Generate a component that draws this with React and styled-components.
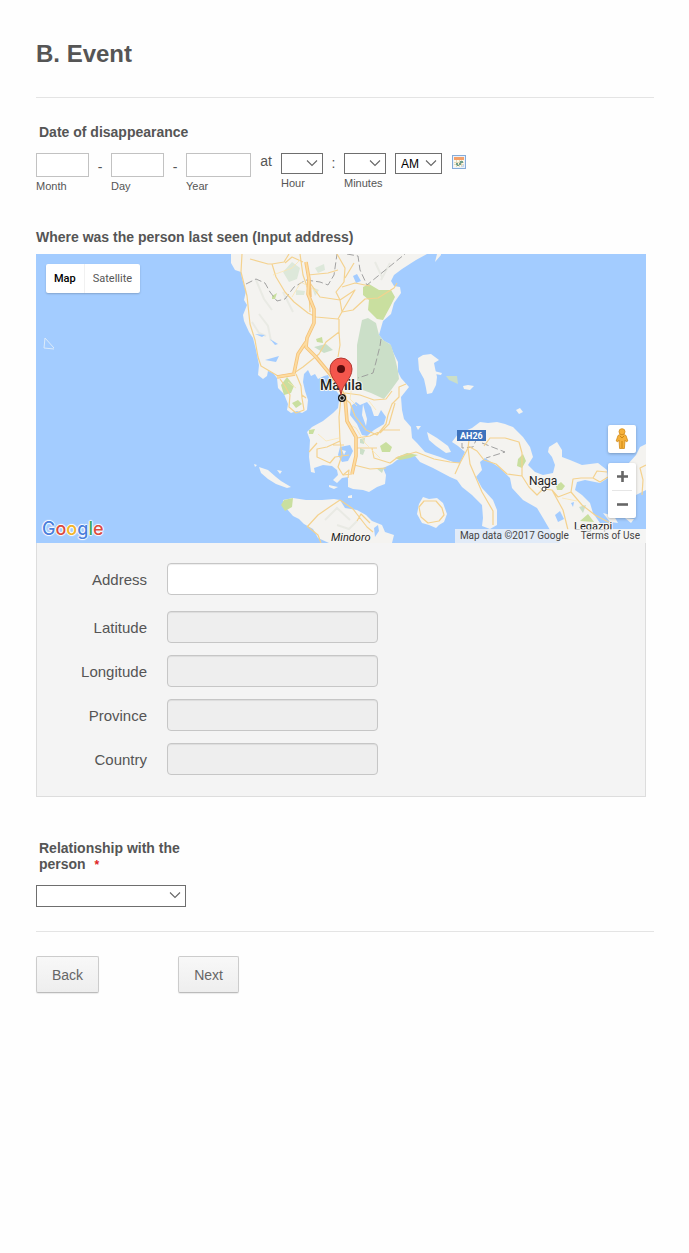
import React from 'react';
import styled, { createGlobalStyle } from 'styled-components';

const GlobalStyle = createGlobalStyle`
  * { box-sizing: border-box; }
  body {
    margin: 0;
    background: #fefefe;
    color: #555;
    font-family: "Liberation Sans", Arial, sans-serif;
    font-size: 14px;
  }
`;

const Form = styled.form`
  display: flex;
  flex-direction: column;
  padding: 40px 35px 24px 36px;
`;

const Title = styled.h2`
  margin: 0;
  font-size: 24px;
  line-height: 28px;
`;

const Divider = styled.hr`
  width: 100%;
  height: 1px;
  margin: ${(p) => p.$before}px 0 ${(p) => p.$after}px;
  border: 0;
  background: #e4e4e4;
`;

const Question = styled.label`
  display: block;
  max-width: ${(p) => (p.$narrow ? '150px' : 'none')};
  padding-left: ${(p) => (p.$indent ? 3 : 0)}px;
  font-size: 14px;
  font-weight: 700;
  line-height: 16px;
`;

const Required = styled.span`
  margin-left: 5px;
  color: #d22;
  font-size: 12px;
`;

const DateRow = styled.div`
  display: flex;
  align-items: flex-start;
  margin: 13px 0 36px;
`;

const Part = styled.div`
  display: flex;
  flex-direction: column;
  gap: 3px;
`;

const PartLabel = styled.label`
  font-size: 11px;
  line-height: 13px;
  color: #555;
`;

const Separator = styled.span`
  width: ${(p) => p.$width}px;
  padding-top: ${(p) => p.$top || 0}px;
  text-align: center;
  line-height: 17px;
`;

const DateInput = styled.input`
  width: ${(p) => p.$width}px;
  height: 24px;
  padding: 2px 4px;
  border: 1px solid #c2c2c2;
  background: #fff;
  font: inherit;
`;

const SelectWrap = styled.div`
  position: relative;
  width: ${(p) => p.$width}px;
  margin-left: ${(p) => p.$before || 0}px;
  height: ${(p) => p.$height || 21}px;

  svg {
    position: absolute;
    top: 6px;
    right: 5px;
    pointer-events: none;
  }
`;

const SelectBox = styled.select`
  appearance: none;
  display: block;
  width: 100%;
  height: 100%;
  padding: 0 5px;
  border: 1px solid #6e6e6e;
  border-radius: 0;
  background: #fff;
  color: #000;
  font-family: inherit;
  font-size: 12px;
`;

const IconButton = styled.button`
  display: flex;
  margin: 2px 0 0 10px;
  padding: 0;
  border: 0;
  background: none;
`;

const Picker = styled.section`
  margin: 9px 8px 43px 0;
`;

const MapView = styled.div`
  position: relative;
  height: 289px;
  overflow: hidden;
  background: #a3ccff;
  font-family: Roboto, sans-serif;
`;

const MapArt = styled.svg`
  display: block;
  width: 100%;
  height: 100%;
`;

const MapTypes = styled.div`
  position: absolute;
  top: 10px;
  left: 10px;
  display: flex;
  border-radius: 2px;
  background: #fff;
  box-shadow: 0 1px 2px rgba(0, 0, 0, 0.2);
`;

const MapType = styled.button`
  height: 29px;
  padding: 0 8px;
  border: 0;
  border-left: ${(p) => (p.$active ? '0' : '1px solid #f1f1f1')};
  background: none;
  color: ${(p) => (p.$active ? '#000' : '#565656')};
  font-family: inherit;
  font-size: 11px;
  font-weight: ${(p) => (p.$active ? 500 : 400)};
`;

const MapTools = styled.div`
  position: absolute;
  right: 10px;
  bottom: 25px;
  display: flex;
  flex-direction: column;
  gap: 10px;
`;

const ToolCard = styled.div`
  display: flex;
  flex-direction: column;
  align-items: center;
  width: 28px;
  border-radius: 2px;
  background: #fff;
  box-shadow: 0 1px 3px rgba(0, 0, 0, 0.25);
`;

const ToolButton = styled.button`
  display: flex;
  align-items: center;
  justify-content: center;
  width: 28px;
  height: ${(p) => p.$height}px;
  padding: 0;
  border: 0;
  background: none;
`;

const ToolRule = styled.span`
  width: 20px;
  height: 1px;
  background: #e6e6e6;
`;

const Attribution = styled.div`
  position: absolute;
  right: 0;
  bottom: 0;
  display: flex;
  gap: 12px;
  padding: 0 6px 0 5px;
  background: rgba(245, 245, 245, 0.75);
  color: #444;
  font-size: 10px;
  line-height: 14px;

  a {
    color: inherit;
    text-decoration: none;
  }
`;

const Details = styled.div`
  display: flex;
  flex-direction: column;
  gap: 12px;
  padding: 20px 20px 21px 0;
  border: 1px solid #ddd;
  border-top: 0;
  background: #f4f4f4;
`;

const DetailRow = styled.div`
  display: grid;
  grid-template-columns: 110px 211px;
  gap: 20px;
  align-items: center;
  padding-bottom: ${(p) => (p.$first ? 4 : 0)}px;

  label {
    padding-top: 2px;
    text-align: right;
    font-size: 15px;
    line-height: 18px;
  }
`;

const DetailInput = styled.input`
  width: 100%;
  height: 32px;
  padding: 4px 8px;
  border: 1px solid #c6c6c6;
  border-radius: 4px;
  background: ${(p) => (p.readOnly ? '#eee' : '#fff')};
  box-shadow: inset 0 1px 1px rgba(0, 0, 0, 0.075);
  font: inherit;
`;

const Answer = styled.div`
  margin-top: 12px;
`;

const Actions = styled.div`
  display: flex;
  gap: 79px;
`;

const Button = styled.button`
  height: 37px;
  padding: 0 15px;
  border: 1px solid #ccc;
  border-bottom-color: #bbb;
  border-radius: 2px;
  background: linear-gradient(#f8f8f8, #eee);
  box-shadow: 0 1px 1px rgba(0, 0, 0, 0.08);
  color: #666;
  font-family: inherit;
  font-size: 14px;
`;

const Logo = styled.div`
  position: absolute;
  left: 6px;
  bottom: 1px;
  font-family: Inter, sans-serif;
  font-size: 18px;
  line-height: 26px;
  font-weight: 500;
  text-shadow: 1px 0 1px #fff, -1px 0 1px #fff, 0 1px 1px #fff, 0 -1px 1px #fff;
`;

const Tint = styled.span`
  color: ${(p) => p.$color};
`;

const logoColors = ['#4a7fdc', '#dc4a40', '#f2b52a', '#4a7fdc', '#3da757', '#dc4a40'];

const details = ['Address', 'Latitude', 'Longitude', 'Province', 'Country'];

function Select({ id, label, value = '', width, height, before }) {
  return (
    <SelectWrap $width={width} $height={height} $before={before}>
      <SelectBox id={id} aria-label={label} defaultValue={value}>
        <option value={value}>{value}</option>
      </SelectBox>
      <svg width="12" height="9" viewBox="0 0 12 9" aria-hidden="true">
        <path d="M1 1.5 6 6.5 11 1.5" fill="none" stroke="#666" strokeWidth="1.1" />
      </svg>
    </SelectWrap>
  );
}

function CalendarIcon() {
  return (
    <svg width="14" height="14" viewBox="0 0 14 14" aria-hidden="true">
      <rect x="0.5" y="0.5" width="13" height="13" fill="#eaf2fb" stroke="#85abd8" />
      <rect x="2" y="2" width="10" height="3" fill="#f3a06a" />
      <path d="M2 5h10v7H2z" fill="#fbf8ec" />
      <path d="M2 7.500h10M2 9.500h10M4.500 5v7M7.500 5v7M9.500 5v7" stroke="#d9cda6" strokeWidth="0.7" />
      <path d="M8 6h3v2H8zM7 8h2v2H7zM4 8h2v2H4zM5 10h2v1H5z" fill="#6f9f8c" />
      <path d="M9 12h3V9z" fill="#c5d6ea" />
    </svg>
  );
}

function Pegman() {
  return (
    <svg width="14" height="22" viewBox="0 0 14 22" aria-hidden="true">
      <g fill="#f6b13a" stroke="#d18b1c" strokeWidth="0.8" strokeLinejoin="round">
        <path d="M3 7.500 1.200 13l1.600.8L4 12l.6 8.500h4.800L10 12l1.200 1.800 1.600-.8L11 7.500 9 6.500H5z" />
        <circle cx="7" cy="3.700" r="3" />
      </g>
      <path d="M7 13v7M5 8 7 10l2-2" stroke="#c8820c" strokeWidth="0.9" fill="none" />
    </svg>
  );
}

function LuzonMap() {
  return (
    <MapArt viewBox="36 254 610 289" preserveAspectRatio="xMidYMid slice" role="img" aria-label="Map of Luzon centred on Manila">
      <rect x="-1000" y="254" width="3000" height="289" fill="#a3ccff" />
      <g fill="#f4f3f0">
        <path d="M231 254 231 263 235 270 241 272 242 278 244 285 246 291 244 300 247 305 243 315 244 321 249 332 253 338 256 350 259 365 258 375 263 379 267 376 268 371 273 373 277 378 278 388 284 394 288 404 287 410 291 413 297 411 302 413 307 410 308 400 305 391 303 382 304 374 308 370 311 376 315 374 318 379 324 376 328 375 334 388 341 397 339 401 338 408 333 413 323 421 312 427 307 432 310 440 309 457 311 472 315 473 314 468 323 465 332 466 337 470 338 475 333 480 337 483 342 478 348 477 348 487 353 489 363 490 369 492 377 487 385 484 386 475 383 468 392 464 397 460 405 457 415 456 420 462 433 468 450 477 457 480 462 487 472 495 482 505 483 518 482 526 490 529 497 525 497 510 493 500 482 488 476 477 482 470 480 462 485 458 500 468 510 478 512 488 523 500 537 508 543 518 550 530 560 543H646V529H613L600 523 593 513 590 503 582 495 575 490 577 482 585 480 600 483 608 478 607 470 598 463 582 465 570 460 562 457 562 450 557 442 549 447 548 452 552 457 555 465 553 473 543 475 535 472 528 465 533 457 530 447 523 437 513 427 505 424 497 422 488 423 480 422 472 428 458 434 452 442 458 446 465 452 460 463 453 462 440 457 425 452 417 443 412 438 411 427 404 419 402 410 401 397 409 387 401 378 398 372 398 362 393 352 390 344 384 341 379 335 383 321 391 314 394 303 401 293 400 287 394 286 391 281 394 275 402 269 416 260 427 254Z" />
        <path d="M418 358 423 355 431 354 439 360 434 363 435 368 437 377 436 385 432 393 427 394 426 388 424 379 419 370Z" />
        <path d="M463 386 468 385 474 386 470 390 464 389ZM434 371 442 373 441 375 435 374ZM435 262 441 255V254H437Z" />
        <path d="M259 467 268 470 276 477 281 481 291 487 287 488 276 484 268 479 261 473ZM277 470 282 471 280 474ZM329 485 338 487 334 489 329 487ZM348 496 352 495 352 498 348 498ZM254 464 257 465 255 467Z" />
        <path d="M283 500 293 498 306 500 322 500 334 499 340 500 345 508 357 510 366 515 372 521 382 525 385 532 394 535 392 543H329L318 538 313 529 304 524 299 519 293 516 286 508Z" />
        <path d="M427 432 437 438 448 446 451 452 446 453 436 446 429 440Z" />
        <path d="M423 497 429 499 437 498 443 503 447 514 444 522 439 525 436 528 429 525 422 523 417 514 419 504Z" />
        <path d="M646 444 640 447 636 455 628 464 633 470 635 480 636 495 646 490ZM516 410 520 408 523 412 519 414ZM416 426 421 426 418 430ZM603 513 614 516 618 523 610 522ZM625 518 634 519 631 523Z" />
      </g>
      <g fill="#c9df9f">
        <path d="M363 287 369 284 379 290 391 290 395 297 390 307 383 320 377 319 368 310 369 300 363 295Z" />
        <path d="M281 385 287 377 294 386 291 393 284 395ZM284 500 293 498 292 507 285 511 281 505ZM292 403 298 400 302 404 296 408ZM309 430 315 429 313 434 309 434ZM380 446 386 442 392 447 390 452 382 452ZM518 459 523 454 526 461 522 468 517 466ZM556 486 561 482 565 486 562 490 557 490ZM272 296 277 293 275 299 272 299ZM395 458 407 453 418 455 410 458 400 460ZM316 339 322 337 323 343 317 342ZM580 521 588 514 594 522Z" />
      </g>
      <g fill="#cbdfc8">
        <path d="M362 320 368 318 376 323 379 335 383 340 391 345 395 358 398 371 399 379 391 390 384 399 371 393 360 389 357 380 357 345Z" />
        <path d="M314 347 326 344 333 350 324 353ZM360 439 365 438 364 444 360 443ZM360 448 365 450 363 455 360 454ZM579 507 586 505 583 513ZM376 468 384 468 382 473ZM446 376 457 376 458 384 449 380Z" />
      </g>
      <g fill="#dde8da">
        <path d="M283 272 292 262 300 268 297 279 289 282ZM296 290 305 291 304 295 296 295ZM312 287 319 290 315 296ZM315 268 324 264 325 270 318 273Z" />
      </g>
      <g fill="none" stroke="#e9eae4" strokeWidth="2">
        <path d="M256 280 264 299 272 310M259 314 268 326 271 341M252 322 259 333 266 336M375 262 382 277M390 263 381 280M325 520 337 508 350 520M337 525 349 529 357 521M283 292 293 312" />
      </g>
      <g fill="#a3ccff">
        <path d="M351 406 356 402 360 405 367 402 371 407 374 416 378 416 381 410 386 417 384 424 374 430 367 436 362 435 357 424 350 415Z" />
        <path d="M340 447 350 445 353 451 348 461 342 462 338 455ZM353 276 357 274 361 281 356 283ZM374 528 378 525 379 531 375 537ZM555 515 560 511 564 519 558 522ZM571 503 574 502 573 507ZM265 360 279 356 276 362ZM255 334 265 335 262 337ZM270 339 278 344 275 345Z" />
      </g>
      <path d="M363 404 367 419 366 426 362 415ZM342 450 346 451 344 455Z" fill="#f4f3f0" />
      <g fill="none" stroke="#999" strokeWidth="0.9" strokeDasharray="7 3">
        <path d="M246 284 256 279 265 283 270 292 277 301 285 299 294 287 306 280 320 282 328 285 334 275 337 254M347 254 358 256 360 270 367 285 405 254M381 339 380 346 376 362 373 373 358 378M482 443 505 452 486 458M462 443 462 448 473 447 477 438" />
      </g>
      <g fill="none" stroke="#f4d28f" strokeWidth="1.200" strokeLinejoin="round">
        <path d="M242 254 241 272 247 296 250 324 255 340 258 357 261 366 278 376 296 373M250 259 268 264 272 264 276 277 285 292 294 302 308 313 316 317 338 319 343 310 355 290 340 300 336 292 344 282 345 268 337 254M300 254 303 275 309 292 310 312M289 254 284 262 272 264M303 262 292 257 285 263M308 275 328 273 338 270M310 283 320 297 340 300 342 312 353 310 365 299 378 298 394 288 397 283M342 287 355 283 370 286M354 263 345 278M339 319 339 332 326 342 319 354 303 367 294 373 295 366M339 332 340 345 338 357M296 374 301 386 302 398 304 410 296 413 289 407 290 395 285 386 280 379M302 395 306 398" />
        <path d="M341 398 339 417 340 441 327 447 317 449 317 457 330 463 335 457 349 455M340 441 342 455 338 467 343 475 352 474M344 398 350 403 355 416 366 430 377 435 386 424 388 415 392 404 399 397 399 387 406 384M345 393 360 395 374 400 386 399 392 391M357 438 370 436 383 430 400 430M357 448 372 448 374 458 390 463 398 457 416 452 434 459 450 462 460 463 468 448 470 432M354 465 370 469 386 468M377 448 370 448M344 445 333 445M395 403 389 424 380 433" />
        <path d="M468 446 477 451 484 460 496 464 507 474 522 476 529 487 537 495 543 489 552 490 563 510 568 530M484 446 490 438 505 438 519 442 522 453 522 476M552 490 558 497 571 492 573 479 581 478 593 478 597 471 607 472M593 478 600 482 608 477M571 492 582 505 595 515 612 524M468 448 470 464 482 492 493 511 493 525M460 463 455 474M646 465 640 468 643 480 642 495" />
        <path d="M419 507 424 501 436 501 442 508 444 515 439 521 428 523 421 517ZM307 527 318 515 331 506 340 500 353 509 367 527 373 532M357 521 361 514 370 523M307 526 318 535 321 543M348 478 349 470 343 475M309 452 317 443" />
      </g>
      <g fill="none" stroke="#fbe6b3" strokeWidth="0.8">
        <path d="M273 275 292 268 300 260M292 297 301 282 318 292M288 382 296 388M346 423 356 428 365 443 380 458M318 434 326 441 339 438M352 385 350 399 357 406M369 401 376 410M533 482 545 492M562 498 577 501" />
      </g>
      <g fill="none" strokeLinejoin="round">
        <path d="M306 262 309 279 308 294 314 309 314 323 307 338 306 347 316 357 330 374 338 386 345 397 347 421 356 437 356 456 352 474M306 342 298 354 294 373M277 377 295 374M309 279 310 297" stroke="#f5c37c" strokeWidth="3.600" />
        <path d="M306 262 309 279 308 294 314 309 314 323 307 338 306 347 316 357 330 374 338 386 345 397 347 421 356 437 356 456 352 474M306 342 298 354 294 373M277 377 295 374" stroke="#fddca0" strokeWidth="1.800" />
      </g>
      <path d="M54 348 45 338 44 348 54 349" fill="none" stroke="#dcebfa" strokeWidth="1" />
      <g fontFamily="Roboto, sans-serif" fill="#222" stroke="#f7f6f2" strokeWidth="2" paintOrder="stroke" strokeLinejoin="round">
        <text x="320" y="390" fontSize="14" fontWeight="500">Manila</text>
        <text x="529" y="485" fontSize="12">Naga</text>
        <text x="331" y="541" fontSize="11" fontStyle="italic">Mindoro</text>
        <text x="574" y="530" fontSize="11">Legazpi</text>
      </g>
      <circle cx="544" cy="489" r="2" fill="#fff" stroke="#333" strokeWidth="1" />
      <rect x="457" y="430" width="29" height="11" fill="#3c72bd" />
      <text x="460" y="439" fontFamily="Roboto, sans-serif" fontSize="9" fontWeight="700" fill="#fff">AH26</text>
      <circle cx="342" cy="398" r="4" fill="#111" />
      <circle cx="342" cy="398" r="2.300" fill="#111" stroke="#fff" strokeWidth="0.9" />
      <path d="M341 395C340 384 330 379 330 369A11 11 0 0 1 352 369C352 379 342 384 341 395Z" fill="#f4564c" stroke="#b23730" strokeWidth="1" />
      <circle cx="341" cy="369" r="4" fill="#5c0d0d" />
    </MapArt>
  );
}

export default function App() {
  return (
    <>
      <GlobalStyle />
      <Form onSubmit={(e) => e.preventDefault()}>
        <Title>B. Event</Title>
        <Divider $before={29} $after={26} />

        <Question $indent htmlFor="month">Date of disappearance</Question>
        <DateRow>
          <Part>
            <DateInput id="month" $width={53} />
            <PartLabel htmlFor="month">Month</PartLabel>
          </Part>
          <Separator $width={22} $top={6}>-</Separator>
          <Part>
            <DateInput id="day" $width={53} />
            <PartLabel htmlFor="day">Day</PartLabel>
          </Part>
          <Separator $width={22} $top={6}>-</Separator>
          <Part>
            <DateInput id="year" $width={65} />
            <PartLabel htmlFor="year">Year</PartLabel>
          </Part>
          <Separator $width={30}>at</Separator>
          <Part>
            <Select id="hour" width={42} />
            <PartLabel htmlFor="hour">Hour</PartLabel>
          </Part>
          <Separator $width={21} $top={2}>:</Separator>
          <Part>
            <Select id="minutes" width={42} />
            <PartLabel htmlFor="minutes">Minutes</PartLabel>
          </Part>
          <Select id="period" label="AM or PM" value="AM" width={47} before={9} />
          <IconButton type="button" aria-label="Pick a date">
            <CalendarIcon />
          </IconButton>
        </DateRow>

        <Question htmlFor="address">Where was the person last seen (Input address)</Question>
        <Picker>
          <MapView>
            <LuzonMap />
            <MapTypes>
              <MapType type="button" $active>Map</MapType>
              <MapType type="button">Satellite</MapType>
            </MapTypes>
            <Logo>
              {'Google'.split('').map((letter, i) => (
                <Tint key={i} $color={logoColors[i]}>{letter}</Tint>
              ))}
            </Logo>
            <MapTools>
              <ToolCard>
                <ToolButton type="button" $height={28} aria-label="Street view">
                  <Pegman />
                </ToolButton>
              </ToolCard>
              <ToolCard>
                <ToolButton type="button" $height={27} aria-label="Zoom in">
                  <svg width="11" height="11" viewBox="0 0 11 11" aria-hidden="true">
                    <path d="M0 5.500h11M5.500 0v11" stroke="#666" strokeWidth="2.600" />
                  </svg>
                </ToolButton>
                <ToolRule />
                <ToolButton type="button" $height={27} aria-label="Zoom out">
                  <svg width="11" height="11" viewBox="0 0 11 11" aria-hidden="true">
                    <path d="M0 5.500h11" stroke="#666" strokeWidth="2.600" />
                  </svg>
                </ToolButton>
              </ToolCard>
            </MapTools>
            <Attribution>
              <span>Map data ©2017 Google</span>
              <a href="#terms">Terms of Use</a>
            </Attribution>
          </MapView>
          <Details>
            {details.map((name, i) => (
              <DetailRow key={name} $first={i === 0}>
                <label htmlFor={name.toLowerCase()}>{name}</label>
                <DetailInput id={name.toLowerCase()} readOnly={i > 0} />
              </DetailRow>
            ))}
          </Details>
        </Picker>

        <Question $indent $narrow htmlFor="relationship">
          Relationship with the person <Required>*</Required>
        </Question>
        <Answer>
          <Select id="relationship" width={150} height={22} />
        </Answer>
        <Divider $before={24} $after={24} />

        <Actions>
          <Button type="button">Back</Button>
          <Button type="submit">Next</Button>
        </Actions>
      </Form>
    </>
  );
}
